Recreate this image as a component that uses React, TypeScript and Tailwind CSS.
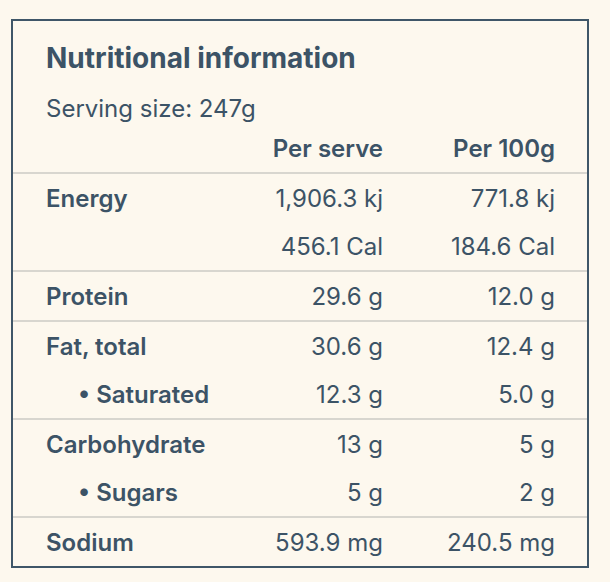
const rows: { label: string; sub?: boolean; serve: string; per100: string }[][] = [
  [
    { label: "Energy", serve: "1,906.3 kj", per100: "771.8 kj" },
    { label: "", serve: "456.1 Cal", per100: "184.6 Cal" },
  ],
  [{ label: "Protein", serve: "29.6 g", per100: "12.0 g" }],
  [
    { label: "Fat, total", serve: "30.6 g", per100: "12.4 g" },
    { label: "Saturated", sub: true, serve: "12.3 g", per100: "5.0 g" },
  ],
  [
    { label: "Carbohydrate", serve: "13 g", per100: "5 g" },
    { label: "Sugars", sub: true, serve: "5 g", per100: "2 g" },
  ],
  [{ label: "Sodium", serve: "593.9 mg", per100: "240.5 mg" }],
];

export default function App() {
  return (
    <div
      className="min-h-screen bg-[#fdf8ee] pt-[19px] pl-[11px] text-[#3c5366]"
      style={{ fontFamily: "Inter, 'Noto Sans', sans-serif" }}
    >
      <div className="w-[578px] border-2 border-[#3f5668]">
        {/* Heading */}
        <div className="px-[33px] pt-[21px] pb-[1px]">
          <h2 className="text-[28px] leading-[32px] font-bold">Nutritional information</h2>
          <p className="mt-[21px] text-[24px] leading-[28px]">Serving size: 247g</p>
        </div>

        {/* Column headers */}
        <div className="grid h-12 grid-cols-[1fr_170px_172px] items-center pt-[2px] pl-[33px] pr-8 text-[24px] font-semibold">
          <span />
          <span className="text-right">Per serve</span>
          <span className="text-right">Per 100g</span>
        </div>

        {rows.map((group, i) => (
          <div key={i} className="border-t-2 border-[#d8d6cf]">
            {group.map((r, j) => (
              <div
                key={j}
                className="grid h-12 grid-cols-[1fr_170px_172px] items-center pt-[2px] pl-[33px] pr-8 text-[24px]"
              >
                <span className={r.sub ? "pl-[32px] font-semibold" : "font-semibold"}>
                  {r.sub ? "• " + r.label : r.label}
                </span>
                <span className="text-right">{r.serve}</span>
                <span className="text-right">{r.per100}</span>
              </div>
            ))}
          </div>
        ))}
      </div>
    </div>
  );
}
